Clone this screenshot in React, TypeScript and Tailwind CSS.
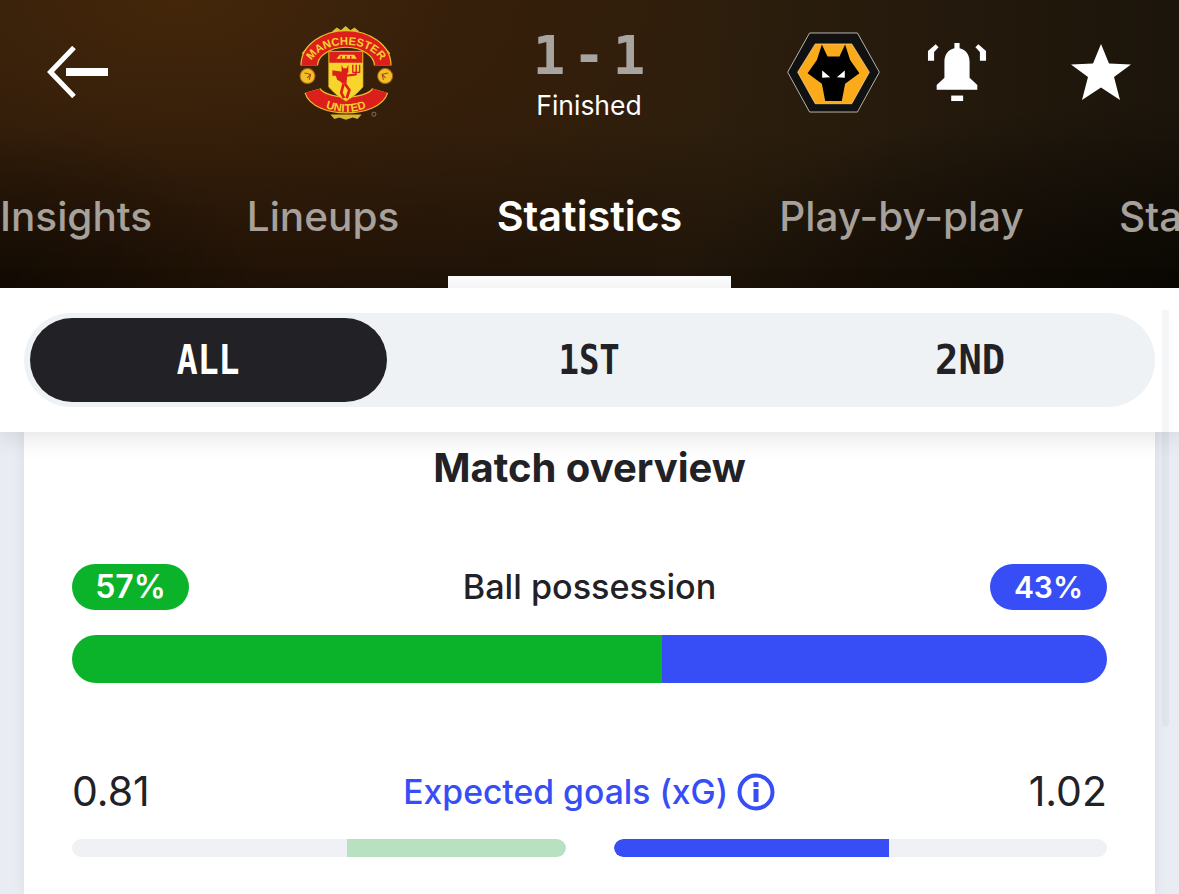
const sans = "font-['Inter',sans-serif]";

function BackArrow() {
  return (
    <svg width="61" height="52" viewBox="0 0 61 52" fill="none" className="shrink-0">
      <path d="M27 1.5 L3.5 26 L27 50.5" stroke="white" strokeWidth="5" />
      <rect x="19" y="22" width="42" height="8" fill="white" />
    </svg>
  );
}

function UnitedCrest() {
  return (
    <svg width="97" height="97" viewBox="55 30 285 285" className="shrink-0 -mx-[2px]">
      <defs>
        <path id="mu-top" d="M90 158 A105 66 0 0 1 302 158" />
        <path id="mu-bottom" d="M98 234 A98 54 0 0 0 294 234" />
      </defs>
      {/* ornaments */}
      <path d="M155 52 l14 -12 l12 8 l14 -12 l14 12 l12 -8 l14 12 l-8 8 h-64z" fill="#d8c22a" />
      <path d="M150 296 h92 l-12 13 l-14 -4 l-20 6 l-20 -6 l-14 4z" fill="#d8b52a" />
      <path d="M66 116 l26 -30 l8 18 l-18 28z" fill="#d8c22a" />
      <path d="M326 116 l-26 -30 l-8 18 l18 28z" fill="#d8c22a" />
      {/* top banner */}
      <path d="M88 152 A108 78 0 0 1 304 152" fill="none" stroke="#e8bf2c" strokeWidth="52" />
      <path d="M88 152 A108 78 0 0 1 304 152" fill="none" stroke="#dc1f1a" strokeWidth="45" />
      <text fill="#f6d02f" fontFamily="'Liberation Sans',sans-serif" fontWeight="700" fontSize="33">
        <textPath href="#mu-top" startOffset="50%" textAnchor="middle">MANCHESTER</textPath>
      </text>
      {/* bottom banner */}
      <path d="M98 226 A100 49 0 0 0 296 226" fill="none" stroke="#e8bf2c" strokeWidth="50" />
      <path d="M98 226 A100 49 0 0 0 296 226" fill="none" stroke="#dc1f1a" strokeWidth="43" />
      <text fill="#f6d02f" fontFamily="'Liberation Sans',sans-serif" fontWeight="700" fontSize="33">
        <textPath href="#mu-bottom" startOffset="50%" textAnchor="middle">UNITED</textPath>
      </text>
      {/* balls */}
      <circle cx="83" cy="183" r="22" fill="#f2bf24" stroke="#a8651c" strokeWidth="3" />
      <path d="M74 174 L92 178 L88 194 M92 178 L82 188" fill="none" stroke="#a8431c" strokeWidth="3" />
      <circle cx="311" cy="183" r="22" fill="#f2bf24" stroke="#a8651c" strokeWidth="3" />
      <path d="M320 174 L302 178 L306 194 M302 178 L312 188" fill="none" stroke="#a8431c" strokeWidth="3" />
      {/* shield */}
      <path d="M145 110 H246 V215 Q225 240 196 257 Q166 240 145 215 Z" fill="#f7d52c" stroke="#c9a21f" strokeWidth="2" />
      <path d="M147 112 H244 V144 H147 Z" fill="#dc1f1a" />
      <path d="M168 132 l10 -12 h42 l8 12 z" fill="#f7d52c" />
      <path d="M182 124 v8 M196 124 v8 M210 124 v8" stroke="#dc1f1a" strokeWidth="4" />
      {/* devil */}
      <g fill="none" stroke="#dc1f1a" strokeLinejoin="round">
        <path d="M193 168 L190 205" strokeWidth="15" />
        <path d="M189 205 L182 232 L190 248" strokeWidth="8" />
        <path d="M192 205 L206 224 L198 248" strokeWidth="8" />
        <path d="M196 182 L226 178" strokeWidth="6" />
        <path d="M226 180 V150 M216 150 V172 H236 V150" strokeWidth="4" />
      </g>
      <path d="M183 150 L188 160 H198 L203 150 L203 172 L193 178 L183 172 Z" fill="#dc1f1a" />
      <path d="M156 166 L186 170 L184 202 L170 194 L166 182 L156 182 Z" fill="#dc1f1a" />
      <circle cx="278" cy="295" r="6" fill="none" stroke="#8a8176" strokeWidth="2.5" />
    </svg>
  );
}

function WolvesCrest() {
  return (
    <svg width="93" height="81" viewBox="50 35 280 242" className="shrink-0">
      <polygon points="52,155 118,37 262,37 328,155 262,275 118,275" fill="#111" stroke="#b8b4ac" strokeWidth="3" />
      <polygon points="82,155 135,70 245,70 298,155 245,250 135,250" fill="#fbaa19" stroke="#f5dfa8" strokeWidth="2" />
      <polygon points="155,72 172,108 208,108 225,72 240,118 268,158 225,190 215,242 165,242 155,190 112,158 140,118" fill="#000" />
      <polygon points="156,150 180,170 156,172" fill="#fff" />
      <polygon points="224,150 200,170 224,172" fill="#fff" />
    </svg>
  );
}

function Bell() {
  return (
    <svg width="60" height="60" viewBox="468 62 186 186" className="shrink-0" fill="white">
      <path d="M553 65 h16 v16 c20 5 31 20 31 42 v50 l24 22 v15 h-126 v-15 l24 -22 v-50 c0 -22 11 -37 31 -42z" />
      <rect x="543" y="228" width="37" height="17" />
      <path d="M471 120 v-30 l24 -21 l9 9 l-14 15 v27z" />
      <path d="M651 120 v-30 l-24 -21 l-9 9 l14 15 v27z" />
    </svg>
  );
}

function Star() {
  return (
    <svg width="60" height="56" viewBox="0 0 60 63" preserveAspectRatio="none" fill="white" className="shrink-0">
      <polygon points="30,0 38,22 60,23 43,37 49,63 30,49 11,63 17,37 0,23 22,22" />
    </svg>
  );
}

function InfoIcon() {
  return (
    <svg width="38" height="38" viewBox="0 0 38 38" fill="none" className="shrink-0">
      <circle cx="19" cy="19" r="16.5" stroke="#374df5" strokeWidth="4" />
      <rect x="16.5" y="9" width="5" height="5" fill="#374df5" />
      <rect x="16.5" y="16" width="5" height="13" fill="#374df5" />
    </svg>
  );
}

const tabs = [
  { label: "Insights", width: "w-[244px]", active: false },
  { label: "Lineups", width: "w-[250px]", active: false },
  { label: "Statistics", width: "w-[283px]", active: true },
  { label: "Play-by-play", width: "w-[341px]", active: false },
  { label: "Standings", width: "w-[288px]", active: false },
];

export default function App() {
  return (
    <div className={`${sans} w-[1179px] h-[894px] overflow-hidden bg-[#e9edf3] relative`}>
      {/* Header */}
      <header className="h-[288px] flex flex-col overflow-hidden bg-[radial-gradient(ellipse_500px_190px_at_1179px_288px,rgba(5,4,0,0.65),transparent),radial-gradient(ellipse_260px_170px_at_0px_288px,rgba(5,4,0,0.45),transparent),linear-gradient(180deg,transparent_45%,rgba(10,5,0,0.4)_100%),radial-gradient(ellipse_620px_300px_at_180px_0px,#44270a_0%,#361f0a_45%,transparent_100%),linear-gradient(90deg,#2a1808_0%,#2e1a09_25%,#2c1e0d_60%,#1c150b_100%)]">
        <div className="flex items-center h-[144px] pl-[47px]">
          <BackArrow />
          <div className="ml-[192px]"><UnitedCrest /></div>
          <div className="ml-[96px] w-[200px] self-start mt-[33px] flex flex-col items-center">
            <div className="flex items-center justify-center h-[46px] text-[#a8a5a1] font-['DejaVu_Sans_Mono',monospace] font-bold text-[54px] leading-none">
              <span className="w-[30px] flex justify-center">1</span>
              <span className="w-[50px] flex justify-center">-</span>
              <span className="w-[30px] flex justify-center">1</span>
            </div>
            <div className="mt-[9px] text-white text-[26.5px] leading-[34px] font-normal">Finished</div>
          </div>
          <div className="ml-[98px]"><WolvesCrest /></div>
          <div className="ml-[47px]"><Bell /></div>
          <div className="ml-[84px]"><Star /></div>
        </div>
        <nav className="flex flex-1 ml-[-46px] pt-[2px] text-[40.5px] font-medium">
          {tabs.map((t) => (
            <div
              key={t.label}
              className={`${t.width} shrink-0 relative flex items-center justify-center ${
                t.active ? "text-white font-semibold text-[41.3px]" : "text-[#a6a19b]"
              }`}
            >
              {t.label}
              {t.active && <span className="absolute left-0 right-0 bottom-0 h-[12px] bg-white" />}
            </div>
          ))}
        </nav>
      </header>

      {/* Period switch */}
      <div className="relative z-10 h-[144px] bg-white shadow-[0_4px_24px_rgba(0,0,0,0.12)] pt-[25px] pl-[24px]">
        <div className="w-[1131px] h-[94px] rounded-full bg-[#eff2f5] flex items-center pl-[6px] font-['DejaVu_Sans_Mono',monospace] font-bold text-[40px] text-[#222226]">
          <div className="w-[357px] h-[84px] rounded-[42px] bg-[#222226] text-white flex items-center justify-center">
            <span className="scale-x-[0.87]">ALL</span>
          </div>
          <div className="w-[404px] flex justify-center"><span className="scale-x-[0.85]">1ST</span></div>
          <div className="w-[358px] flex justify-center"><span className="scale-x-[0.97]">2ND</span></div>
        </div>
        <div className="absolute left-[1162px] top-[22px] w-[7px] h-[122px] bg-[#f5f6f7]" />
      </div>

      {/* Card */}
      <main className="ml-[24px] w-[1131px] h-[462px] bg-white shadow-[0_0_12px_rgba(34,34,38,0.08)] px-[48px] text-[#222226]">
        <h2 className="text-[40px] font-bold leading-[46px] text-center pt-[13px] h-[132px]">Match overview</h2>

        <div className="flex items-center justify-between h-[46px]">
          <span className="w-[117px] h-[46px] rounded-full bg-[#0bb32a] text-white text-[32px] font-semibold flex items-center justify-center">57%</span>
          <span className="text-[34.2px] font-medium">Ball possession</span>
          <span className="w-[117px] h-[46px] rounded-full bg-[#374df5] text-white text-[30px] font-semibold flex items-center justify-center">43%</span>
        </div>
        <div className="mt-[25px] h-[48px] rounded-full overflow-hidden flex">
          <div className="w-[590px] bg-[#0bb32a]" />
          <div className="flex-1 bg-[#374df5]" />
        </div>

        <div className="mt-[84px] flex items-center justify-between h-[50px] text-[41px]">
          <span>0.81</span>
          <span className="flex items-center gap-[9px] text-[#374df5] text-[33.7px] font-medium">
            Expected goals (xG)
            <InfoIcon />
          </span>
          <span>1.02</span>
        </div>
        <div className="mt-[22px] flex gap-[48px]">
          <div className="w-[494px] h-[18px] rounded-full bg-[#f0f1f4] flex justify-end overflow-hidden">
            <div className="w-[219px] bg-[#b8e1c1] rounded-r-full" />
          </div>
          <div className="flex-1 h-[18px] rounded-full bg-[#f0f1f4] overflow-hidden">
            <div className="w-[275px] h-full bg-[#374df5] rounded-l-full" />
          </div>
        </div>
      </main>
      {/* Scrollbar track */}
      <div className="absolute left-[1162px] top-[432px] w-[7px] h-[295px] rounded-b-full bg-black/[0.03]" />
    </div>
  );
}
